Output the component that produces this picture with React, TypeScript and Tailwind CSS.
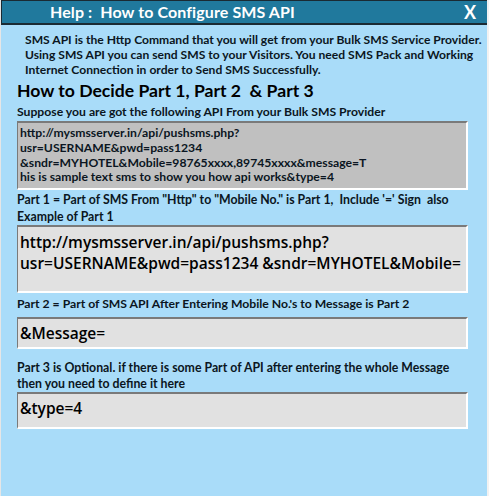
export default function App() {
  const body = { fontFamily: "Lato, 'Open Sans', sans-serif" };
  const mono = { fontFamily: "'Open Sans', 'DejaVu Sans', sans-serif" };
  const inset =
    "w-[451px] border-t-2 border-l border-t-[#7a7a7a] border-l-[#7a7a7a] border-b-2 border-r-2 border-b-white border-r-white";
  return (
    <div className="w-[491px] h-[496px] flex bg-white whitespace-nowrap overflow-hidden" style={body}>
      <div className="w-px shrink-0 bg-[#e6e6e6]" />
      <div className="w-[488px] min-w-0 shrink-0 flex flex-col bg-[#a9dcf9] border-r-2 border-r-[#f2f2f2]">
        <div className="h-[25px] shrink-0 flex items-center justify-between bg-[#20799d] border-t border-l border-b-2 border-[#1a2a33] pl-[48px] pr-[11px] text-white font-bold">
          <span className="text-[16px] leading-none tracking-[0.1px]">Help :&nbsp; How to Configure SMS API</span>
          <span className="text-[18px] leading-none">X</span>
        </div>
        <div className="pl-[16px] text-[#0b1622] font-bold">
          <p className="pl-[8px] pt-[7px] text-[12.1px] leading-[15px]">
            SMS API is the Http Command that you will get from your Bulk SMS Service Provider.<br />
            Using SMS API you can send SMS to your Visitors. You need SMS Pack and Working<br />
            Internet Connection in order to Send SMS Successfully.
          </p>
          <h2 className="mt-[3px] text-[17.6px] leading-[22px] text-black">How to Decide Part 1, Part 2&nbsp; &amp; Part 3</h2>
          <p className="mt-[2px] text-[12.2px] leading-[15px]">Suppose you are got the following API From your Bulk SMS Provider</p>
          <div className={`mt-[2px] h-[69px] ${inset} bg-[#c0c0c0] pl-[2px] pt-[3px] text-[12.2px] leading-[14.8px] text-[#0b1622]`}>
            http://mysmsserver.in/api/pushsms.php?<br />
            usr=USERNAME&amp;pwd=pass1234<br />
            &amp;sndr=MYHOTEL&amp;Mobile=98765xxxx,89745xxxx&amp;message=T<br />
            his is sample text sms to show you how api works&amp;type=4
          </div>
          <p className="mt-[2px] text-[12.3px] leading-[16.5px]">
            Part 1 = Part of SMS From "Http" to "Mobile No." is Part 1,&nbsp; Include '=' Sign&nbsp; also<br />
            Example of Part 1
          </p>
          <div className={`mt-0 h-[68px] ${inset} bg-[#e1e1e1] pl-[2px] pt-[5px] text-[15.5px] leading-[21px] font-semibold text-black`} style={mono}>
            http://mysmsserver.in/api/pushsms.php?<br />
            usr=USERNAME&amp;pwd=pass1234 &amp;sndr=MYHOTEL&amp;Mobile=
          </div>
          <p className="mt-[3px] text-[12.2px] leading-[16px]">Part 2 = Part of SMS API After Entering Mobile No.'s to Message is Part 2</p>
          <div className={`mt-[5px] h-[32px] ${inset} bg-[#e1e1e1] pl-[2px] pt-[4px] text-[15.5px] leading-[20px] font-semibold text-black`} style={mono}>
            &amp;Message=
          </div>
          <p className="mt-[11px] text-[12.3px] leading-[16px]">
            Part 3 is Optional. if there is some Part of API after entering the whole Message<br />
            then you need to define it here
          </p>
          <div className={`mt-0 h-[37px] ${inset} bg-[#e1e1e1] pl-[2px] pt-[4px] text-[15.5px] leading-[20px] font-semibold text-black`} style={mono}>
            &amp;type=4
          </div>
        </div>
      </div>
    </div>
  );
}
